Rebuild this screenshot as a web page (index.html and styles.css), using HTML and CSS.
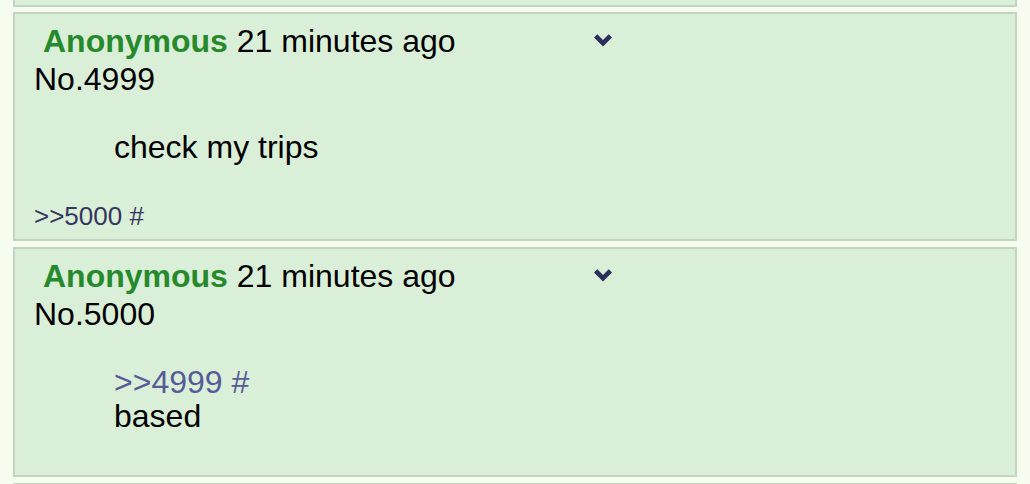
FILE: index.html
```html
<!DOCTYPE html>
<html>
<head>
<meta charset="utf-8">
<link rel="stylesheet" href="styles.css">
</head>
<body>
<div class="thread">
  <div class="post post-stub"></div>
  <div class="post">
    <div class="post-head">
      <div class="post-meta"><span class="name">Anonymous</span> <span class="date">21 minutes ago</span></div>
      <svg class="chev" viewBox="0 0 18 13" width="18" height="13"><path d="M0 3.6 L3.3 0.3 L9 6 L14.7 0.3 L18 3.6 L9 12.6 Z" fill="#2c2e5e"/></svg>
    </div>
    <div class="post-no">No.4999</div>
    <div class="comment">check my trips</div>
    <div class="backlinks">&gt;&gt;5000 #</div>
  </div>
  <div class="post">
    <div class="post-head">
      <div class="post-meta"><span class="name">Anonymous</span> <span class="date">21 minutes ago</span></div>
      <svg class="chev" viewBox="0 0 18 13" width="18" height="13"><path d="M0 3.6 L3.3 0.3 L9 6 L14.7 0.3 L18 3.6 L9 12.6 Z" fill="#2c2e5e"/></svg>
    </div>
    <div class="post-no">No.5000</div>
    <div class="comment comment-last"><span class="quotelink">&gt;&gt;4999 #</span><br>based</div>
  </div>
  <div class="post post-next"></div>
</div>
</body>
</html>
```

FILE: styles.css
```css
html, body {
  margin: 0;
  padding: 0;
  background: #f6fdef;
}
body {
  font-family: "Liberation Sans", Arial, Helvetica, sans-serif;
  font-size: 32px;
  color: #000;
  overflow: hidden;
  height: 484px;
}
.thread {
  padding: 0 13px;
  display: flex;
  flex-direction: column;
  gap: 6px;
}
.post {
  background: #d9efd7;
  border: 2px solid #c1d5bf;
  padding: 8px 19px 8px 19px;
}
.post-stub {
  border-top: none;
  height: 5px;
  padding: 0;
  margin-bottom: -1px;
}
.post-next {
  height: 0;
  padding: 0;
  border-bottom: none;
}
.post-head {
  display: flex;
  justify-content: space-between;
  align-items: flex-start;
  width: 578px;
  line-height: 38px;
}
.name {
  color: #268a2c;
  font-weight: bold;
  margin-left: 9px;
}
.chev {
  margin-top: 12px;
  display: block;
}
.post-no {
  line-height: 38px;
}
.comment {
  margin: 32px 0 32px 80px;
  line-height: 34px;
}
.comment-last {
  margin-bottom: 34px;
}
.quotelink {
  color: #575b98;
}
.backlinks {
  font-size: 26px;
  line-height: 30px;
  padding-top: 5px;
  color: #34365e;
}
```
